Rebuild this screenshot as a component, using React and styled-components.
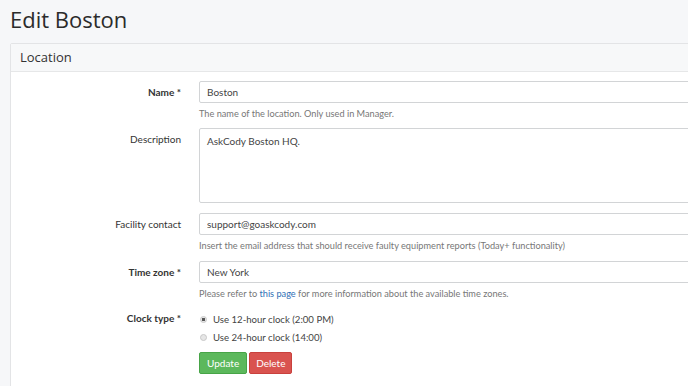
import React from "react";
import styled, { createGlobalStyle } from "styled-components";

const GlobalStyle = createGlobalStyle`
  html, body {
    margin: 0;
    padding: 0;
    background: #f6f7f9;
    font-family: "Lato", "Open Sans", sans-serif;
    color: #333;
    overflow: hidden;
  }
`;

const Page = styled.main`
  padding: 0 0 0 10px;
  width: 760px;
`;

const Title = styled.h1`
  margin: 0;
  height: 43px;
  font-family: "Open Sans", sans-serif;
  font-size: 22px;
  font-weight: 400;
  line-height: 38px;
  color: #2b2b2b;
`;

const Panel = styled.section`
  background: #fff;
  border: 1px solid #e3e4e6;
  border-radius: 2px;
`;

const PanelHeader = styled.header`
  height: 27px;
  padding: 0 9px;
  background: #f7f8f9;
  border-bottom: 1px solid #e6e7e8;
  font-family: "Open Sans", sans-serif;
  font-size: 13px;
  line-height: 27px;
  color: #333;
`;

const PanelBody = styled.div`
  padding: 9px 0 20px 0;
`;

const FormRow = styled.div`
  display: grid;
  grid-template-columns: 170px 1fr;
  column-gap: 18px;
  margin-bottom: ${(p) => p.$gap || 10}px;
`;

const Label = styled.label`
  text-align: right;
  font-size: 10px;
  line-height: 13px;
  padding-top: ${(p) => p.$top || 5}px;
  font-weight: ${(p) => (p.$required ? 700 : 400)};
  color: #333;
`;

const Field = styled.div`
  display: flex;
  flex-direction: column;
`;

const Input = styled.input`
  box-sizing: border-box;
  height: 22px;
  width: 100%;
  padding: 0 7px;
  border: 1px solid #d2d4d6;
  border-radius: 2px;
  font-family: inherit;
  font-size: 10px;
  color: #444;
  background: #fff;
  outline: none;
`;

const TextArea = styled.textarea`
  box-sizing: border-box;
  height: 75px;
  width: 100%;
  padding: 6px 7px;
  border: 1px solid #d2d4d6;
  border-radius: 2px;
  font-family: inherit;
  font-size: 10px;
  line-height: 13px;
  color: #444;
  resize: none;
  outline: none;
  display: block;
`;

const Help = styled.p`
  margin: 4px 0 0 0;
  font-size: 9.2px;
  line-height: 13px;
  color: #777;
`;

const HelpLink = styled.a`
  color: #2f6fb5;
  text-decoration: none;
`;

const RadioLine = styled.label`
  display: flex;
  align-items: center;
  gap: 6px;
  height: 18px;
  font-size: 9.6px;
  color: #444;
`;

const RadioDot = styled.span`
  box-sizing: border-box;
  width: 7px;
  height: 7px;
  border-radius: 50%;
  border: 1px solid #c8c8c8;
  background: ${(p) => (p.$checked ? "radial-gradient(circle, #555 0 1.4px, #e6e6e6 1.8px)" : "#e6e6e6")};
  margin-left: 1px;
`;

const Buttons = styled.div`
  display: flex;
  gap: 2px;
  margin-top: 6px;
`;

const Button = styled.button`
  height: 22px;
  padding: 0 ${(p) => (p.$danger ? 6 : 7)}px;
  border: 1px solid ${(p) => (p.$danger ? "#c9413d" : "#47a447")};
  border-radius: 2px;
  background: ${(p) => (p.$danger ? "#d9534f" : "#5cb85c")};
  color: #fff;
  font-family: inherit;
  font-size: 10px;
  cursor: pointer;
`;

export default function App() {
  return (
    <>
      <GlobalStyle />
      <Page>
        <Title>Edit Boston</Title>
        <Panel>
          <PanelHeader>Location</PanelHeader>
          <PanelBody>
            <FormRow $gap={8}>
              <Label $required>Name *</Label>
              <Field>
                <Input defaultValue="Boston" readOnly />
                <Help>The name of the location. Only used in Manager.</Help>
              </Field>
            </FormRow>
            <FormRow>
              <Label>Description</Label>
              <Field>
                <TextArea defaultValue="AskCody Boston HQ." readOnly />
              </Field>
            </FormRow>
            <FormRow $gap={9}>
              <Label>Facility contact</Label>
              <Field>
                <Input defaultValue="support@goaskcody.com" readOnly />
                <Help>
                  Insert the email address that should receive faulty equipment reports (Today+ functionality)
                </Help>
              </Field>
            </FormRow>
            <FormRow $gap={10}>
              <Label $required>Time zone *</Label>
              <Field>
                <Input defaultValue="New York" readOnly />
                <Help>
                  Please refer to <HelpLink href="#">this page</HelpLink> for more information about the available time zones.
                </Help>
              </Field>
            </FormRow>
            <FormRow>
              <Label $required $top={2}>Clock type *</Label>
              <Field>
                <RadioLine>
                  <RadioDot $checked />
                  Use 12-hour clock (2:00 PM)
                </RadioLine>
                <RadioLine>
                  <RadioDot />
                  Use 24-hour clock (14:00)
                </RadioLine>
                <Buttons>
                  <Button>Update</Button>
                  <Button $danger>Delete</Button>
                </Buttons>
              </Field>
            </FormRow>
          </PanelBody>
        </Panel>
      </Page>
    </>
  );
}
